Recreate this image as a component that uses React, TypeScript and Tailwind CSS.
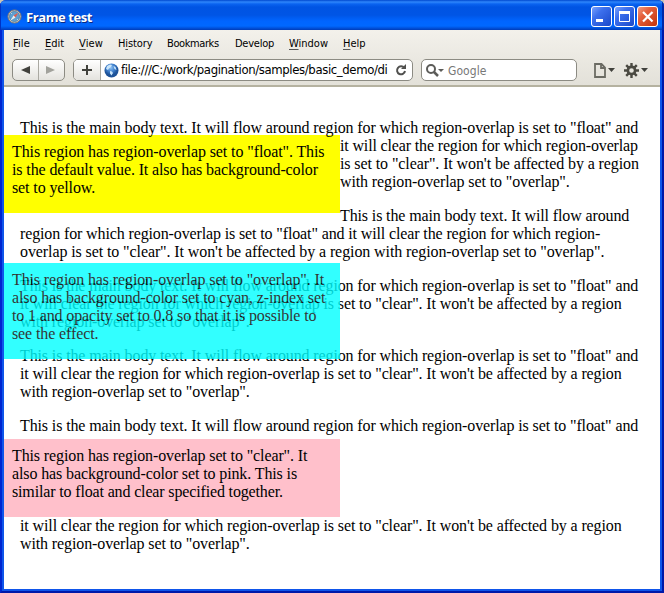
import React from 'react';

const P = ({ children }: { children: React.ReactNode }) => (
  <p className="mb-4 whitespace-nowrap">{children}</p>
);

const L = ({ children, t = '' }: { children: React.ReactNode; t?: string }) => (
  <>
    <span className={t}>{children}</span>
    <br />
  </>
);

const menus = [
  { k: 'F', a: '', b: 'ile', w: 'w-[32px] tracking-[0.1px]' },
  { k: 'E', a: '', b: 'dit', w: 'w-[34px] tracking-[0px]' },
  { k: 'V', a: '', b: 'iew', w: 'w-[39px] tracking-[0.1px]' },
  { k: 'i', a: 'H', b: 'story', w: 'w-[49px] tracking-[-0.1px]' },
  { k: '', a: 'Bookmarks', b: '', w: 'w-[68px] tracking-[-0.4px]' },
  { k: '', a: 'Develop', b: '', w: 'w-[54px] tracking-[-0.25px]' },
  { k: 'W', a: '', b: 'indow', w: 'w-[54px] tracking-[0px]' },
  { k: 'H', a: '', b: 'elp', w: 'w-[40px] tracking-[0px]' },
];

function TitleBar() {
  return (
    <div className="flex h-[30px] shrink-0 items-start bg-[linear-gradient(180deg,#0048cf_0px,#2f86fb_2px,#0a63f0_4px,#0054e3_7px,#0055e5_15px,#0065ff_21px,#0068ff_26px,#0052dd_28px,#003bb8_30px)] pl-[7px] pr-[6px] shadow-[inset_1px_0_0_#0032c4,inset_-2px_0_0_#0029a8]">
      <svg className="mt-[9px]" width="15" height="15" viewBox="0 0 15 15">
        <circle cx="7.5" cy="7.5" r="6.6" fill="#c4c2bc" stroke="#75777c" />
        <circle cx="7.5" cy="7.5" r="5" fill="#5fa0d0" stroke="#4478a5" strokeWidth=".7" />
        <path d="M4 5l1-1M10 4l1 1M4 10l1 1M11 10l-1 1" stroke="#b5d9ec" />
        <path d="M11.5 3.5L6.5 6.5l2 2z" fill="#e25c50" />
        <path d="M3.5 11.5l5-3-2-2z" fill="#eee" />
      </svg>
      <span className="ml-1 mt-[8px] whitespace-nowrap font-['Open_Sans','Noto_Sans',sans-serif] text-[13px] font-bold leading-[18px] tracking-[-0.42px] text-white [text-shadow:1px_1px_0_#0a2a83]">Frame test</span>
      <svg className="ml-auto mt-[6px]" width="67" height="21" viewBox="0 0 67 21">
        <defs>
          <linearGradient id="blueButton" x1="0" y1="0" x2="1" y2="1">
            <stop offset="0" stopColor="#7ea5ff" />
            <stop offset=".35" stopColor="#3d70ed" />
            <stop offset="1" stopColor="#1746c8" />
          </linearGradient>
          <linearGradient id="redButton" x1="0" y1="0" x2="1" y2="1">
            <stop offset="0" stopColor="#f2a188" />
            <stop offset=".35" stopColor="#e5603d" />
            <stop offset="1" stopColor="#c13107" />
          </linearGradient>
        </defs>
        <rect x=".5" y=".5" width="20" height="20" rx="2.5" fill="url(#blueButton)" stroke="#fff" />
        <rect x="23.5" y=".5" width="20" height="20" rx="2.5" fill="url(#blueButton)" stroke="#fff" />
        <rect x="46.5" y=".5" width="20" height="20" rx="2.5" fill="url(#redButton)" stroke="#fff" />
        <path d="M5 13h7v3H5z" fill="#fff" />
        <path d="M28.5 6v9.500h10V6" fill="none" stroke="#fff" />
        <path d="M28 5h11v3H28z" fill="#fff" />
        <path d="M52 6l9.500 9.500M61.500 6L52 15.500" stroke="#fff" strokeWidth="2.2" />
      </svg>
    </div>
  );
}

function Toolbar() {
  return (
    <div className="flex h-[28px] items-start pl-[8px] pt-[2px] font-['DejaVu_Sans_Condensed','DejaVu_Sans',sans-serif]">
      <div className="flex h-[22px] w-[53px] shrink-0 overflow-hidden rounded-[5px] border border-[#8c8b83] bg-linear-to-b from-white to-[#e4e3de]">
        <div className="flex w-[26px] items-center justify-center border-r border-[#aaa9a2]">
          <svg width="10" height="8" viewBox="0 0 10 8"><path d="M0 4l9-4v8z" fill="#41413c" /></svg>
        </div>
        <div className="flex flex-1 items-center justify-center pr-1">
          <svg width="10" height="8" viewBox="0 0 10 8"><path d="M10 4L1 0v8z" fill="#a2a29c" /></svg>
        </div>
      </div>
      <div className="ml-[8px] flex h-[22px] w-[340px] shrink-0 overflow-hidden rounded-[5px] border border-[#8c8b83] bg-white">
        <div className="flex w-[27px] shrink-0 items-center justify-center border-r border-[#aaa9a2] bg-linear-to-b from-white to-[#e4e3de]">
          <svg width="10" height="10" viewBox="0 0 10 10"><path d="M0 5h10M5 0v10" stroke="#41413c" strokeWidth="2" /></svg>
        </div>
        <svg className="ml-[3px] mt-[3px] shrink-0" width="15" height="15" viewBox="0 0 15 15">
          <defs>
            <radialGradient id="globe" cx=".45" cy=".3">
              <stop offset="0" stopColor="#8fc3f5" />
              <stop offset=".6" stopColor="#3d7dca" />
              <stop offset="1" stopColor="#1d5298" />
            </radialGradient>
          </defs>
          <circle cx="7.500" cy="7.500" r="7" fill="url(#globe)" />
          <path d="M3 3l3-1.500 2 .5-1 2-2 1.500L4 7 2 6zM6 8l2 .5 1 1.500-1.500 2.500L6 10.500zM9.500 3l2 1 1 3-2-1z" fill="#c9e5fa" />
        </svg>
        <div className="ml-[2px] w-[268px] overflow-hidden whitespace-nowrap text-[13px] leading-[20px] tracking-[-0.38px] text-black">file:///C:/work/pagination/samples/basic_demo/di</div>
        <svg className="ml-[6px] mt-[4px] shrink-0" width="12" height="12" viewBox="0 0 12 12">
          <path d="M9.300 4A4 4 0 1 0 10 7" fill="none" stroke="#50504e" strokeWidth="2" />
          <path d="M6 5l5-5v5z" fill="#50504e" />
        </svg>
      </div>
      <div className="ml-[8px] flex h-[22px] w-[156px] shrink-0 rounded-[5px] border border-[#8c8b83] bg-white pl-[4px]">
        <svg className="mt-[4px]" width="19" height="13" viewBox="0 0 19 13">
          <circle cx="5" cy="5" r="4" fill="none" stroke="#5c5c59" strokeWidth="2" />
          <path d="M8 8l4 4" stroke="#5c5c59" strokeWidth="2.500" />
          <path d="M12 5h6l-3 3z" fill="#5c5c59" />
        </svg>
        <span className="ml-[3px] text-[12px] leading-[22px] tracking-[0.05px] text-[#777]">Google</span>
      </div>
      <svg className="ml-[17px] mt-[4px] shrink-0" width="55" height="16" viewBox="0 0 55 16">
        <path d="M1 1h6.500L11 4.500V14H1zM7 1v4h4" fill="none" stroke="#6b6b63" strokeWidth="1.800" />
        <path d="M14 5h7l-3.500 4zM47 5h7l-3.500 4z" fill="#41413c" />
        <path d="M37.500 0v15M30 7.500h15M32.200 2.200l10.600 10.600M42.800 2.200L32.200 12.800" stroke="#4b4a42" strokeWidth="2.400" />
        <circle cx="37.500" cy="7.500" r="3.600" fill="#e8e6df" stroke="#4b4a42" strokeWidth="2.600" />
      </svg>
    </div>
  );
}

function Page() {
  return (
    <main className="relative h-[502px] bg-white pl-4 pt-8 font-['Liberation_Serif','Times_New_Roman',serif] text-[16px] leading-[18px] tracking-[-0.115px] text-black">
      <p className="whitespace-nowrap tracking-[-0.12px]">This is the main body text. It will flow around region for which region-overlap is set to "float" and</p>
      <div className="float-left -ml-4 -mt-[2px] h-[78px] w-[336px] whitespace-nowrap bg-[#ffff00] p-2">
        <L t="tracking-[-0.1px]">This region has region-overlap set to "float". This</L>
        <L t="tracking-[-0.12px]">is the default value. It also has background-color</L>
        set to yellow.
      </div>
      <P>
        <L t="tracking-[-0.15px]">it will clear the region for which region-overlap</L>
        <L t="tracking-[-0.1px]">is set to "clear". It won't be affected by a region</L>
        with region-overlap set to "overlap".
      </P>
      <P>
        <L t="tracking-[-0.125px]">This is the main body text. It will flow around</L>
        <L t="tracking-[-0.128px]">region for which region-overlap is set to "float" and it will clear the region for which region-</L>
        <span className="tracking-[-0.098px]">overlap is set to "clear". It won't be affected by a region with region-overlap set to "overlap".</span>
      </P>
      {[0, 1].map((n) => (
        <P key={n}>
          <L t="tracking-[-0.12px]">This is the main body text. It will flow around region for which region-overlap is set to "float" and</L>
          <L>it will clear the region for which region-overlap is set to "clear". It won't be affected by a region</L>
          with region-overlap set to "overlap".
        </P>
      ))}
      <p className="whitespace-nowrap tracking-[-0.12px]">This is the main body text. It will flow around region for which region-overlap is set to "float" and</p>
      <div className="-ml-4 mt-1 h-[78px] w-[336px] whitespace-nowrap bg-[#ffc0cb] p-2">
        <L>This region has region-overlap set to "clear". It</L>
        <L>also has background-color set to pink. This is</L>
        <span className="tracking-[-0.15px]">similar to float and clear specified together.</span>
      </div>
      <P>
        <L>it will clear the region for which region-overlap is set to "clear". It won't be affected by a region</L>
        with region-overlap set to "overlap".
      </P>
      <div className="absolute left-0 top-[176px] z-10 h-[96px] w-[336px] whitespace-nowrap bg-[#00ffff] p-2 opacity-80">
        <L>This region has region-overlap set to "overlap". It</L>
        <L>also has background-color set to cyan, z-index set</L>
        <L t="tracking-[-0.135px]">to 1 and opacity set to 0.8 so that it is possible to</L>
        see the effect.
      </div>
    </main>
  );
}

export default function App() {
  return (
    <div className="h-[593px] w-[664px] overflow-hidden bg-[#c9c5b4]">
      <div className="flex h-full flex-col overflow-hidden rounded-t-[6px] bg-[#0831d9]">
        <TitleBar />
        <div className="h-[563px] border-b-2 border-l-2 border-r-2 border-b-[#0018a8] border-l-[#0026d0] border-r-[#0018a8]">
          <div className="h-[561px] border-x-2 border-b-2 border-[#0f55ea]">
            <div className="h-[57px] border-b-2 border-[#b5b2a0] bg-linear-to-b from-[#f3f1eb] to-[#e3e1d9]">
              <div className="flex h-[27px] items-center pl-[9px] pt-px font-['DejaVu_Sans_Condensed','DejaVu_Sans',sans-serif] text-[11px] text-black">
                {menus.map((m) => (
                  <span key={m.a + m.k + m.b} className={`${m.w} whitespace-nowrap`}>
                    {m.a}
                    <span className="underline decoration-[#555] decoration-1 underline-offset-2">{m.k}</span>
                    {m.b}
                  </span>
                ))}
              </div>
              <Toolbar />
            </div>
            <Page />
          </div>
        </div>
      </div>
    </div>
  );
}
